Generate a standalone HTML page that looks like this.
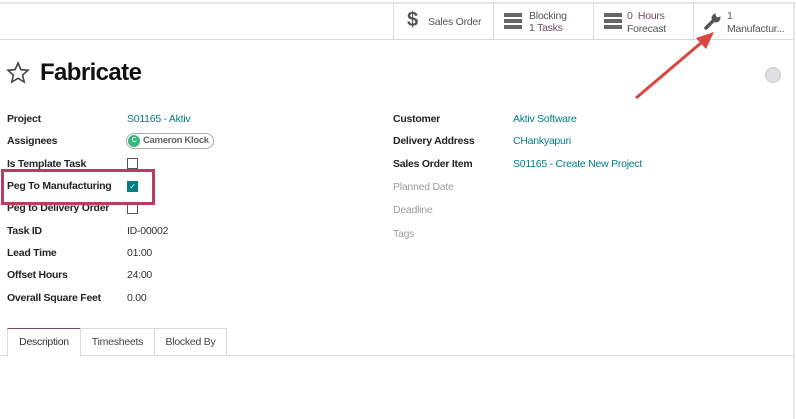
<!DOCTYPE html><html><head><style>
body{margin:0;width:796px;height:419px;overflow:hidden;background:#fff;font-family:"Liberation Sans",sans-serif;position:relative;letter-spacing:-0.25px}
.a{position:absolute;white-space:nowrap}
.l{font-size:10.5px;font-weight:bold;color:#212529}
.v{font-size:10.5px;color:#017e84}
.g{font-size:10.5px;color:#9a9ea3}
.cb{position:absolute;width:9px;height:9px;border:1px solid #555;background:#fff}
.btn{position:absolute;top:4px;height:35px;border-left:1px solid #d8dadd;font-size:10.5px;color:#555}
</style></head><body>
<div class="a" style="left:0;top:2px;width:796px;height:2px;background:#e4e5e8"></div>
<div class="a" style="left:793px;top:2px;width:2px;height:417px;background:#e4e5e8"></div>
<div class="a" style="left:0;top:39px;width:793px;height:1px;background:#d8dadd"></div>
<div class="btn" style="left:393px;width:100px"><span class="a" style="left:13px;top:5px;font-size:20px;font-weight:bold;color:#555">$</span><span class="a" style="left:34px;top:12px">Sales Order</span></div>
<div class="btn" style="left:493px;width:100px"><svg class="a" style="left:10px;top:9px" width="18" height="16"><rect y="0" width="18" height="4" fill="#666"/><rect y="6" width="18" height="4" fill="#666"/><rect y="12" width="18" height="4" fill="#666"/></svg><span class="a" style="left:35px;top:6px;line-height:12px">Blocking<br><span style="color:#714b67">1 Tasks</span></span></div>
<div class="btn" style="left:593px;width:100px"><svg class="a" style="left:10px;top:9px" width="18" height="16"><rect y="0" width="18" height="4" fill="#666"/><rect y="6" width="18" height="4" fill="#666"/><rect y="12" width="18" height="4" fill="#666"/></svg><span class="a" style="left:33px;top:6px;line-height:13px"><span style="color:#714b67">0&nbsp; Hours</span><br>Forecast</span></div>
<div class="btn" style="left:693px;width:100px"><svg class="a" style="left:10px;top:8px" width="18" height="18" viewBox="0 0 18 18"><path d="M2 16 L9 9" stroke="#555" stroke-width="3.5" stroke-linecap="round"/><circle cx="12" cy="6" r="4.5" fill="#555"/><circle cx="14" cy="3" r="2.3" fill="#fff"/></svg><span class="a" style="left:33px;top:6px;line-height:13px"><span style="color:#714b67">1</span><br>Manufactur...</span></div>
<svg class="a" style="left:0;top:0" width="796" height="419"><path d="M636 98 L708 37" stroke="#d9463f" stroke-width="3"/><polygon points="714,32 696,38 706,49" fill="#d9463f"/></svg>
<svg class="a" style="left:6px;top:61px" width="24" height="24" viewBox="0 0 24 24"><polygon points="12,2 14.9,8.6 22,9.3 16.6,14 18.2,21 12,17.3 5.8,21 7.4,14 2,9.3 9.1,8.6" fill="none" stroke="#444" stroke-width="1.6"/></svg>
<div class="a" style="left:40px;top:59px;font-size:24px;font-weight:bold;color:#111;letter-spacing:-0.6px">Fabricate</div>
<div class="a" style="left:765px;top:67px;width:14px;height:14px;border-radius:50%;background:#dee0e3;border:1px solid #c8cacd"></div>
<div class="a l" style="left:7px;top:113px">Project</div><div class="a v" style="left:127px;top:113px">S01165 - Aktiv</div>
<div class="a l" style="left:7px;top:135px">Assignees</div>
<div class="a" style="left:126px;top:133px;width:86px;height:14px;border:1px solid #aaa;border-radius:8px"></div>
<div class="a" style="left:128px;top:135px;width:12px;height:12px;border-radius:50%;background:#3bb67f;color:#fff;font-size:7px;text-align:center;line-height:12px">C</div>
<div class="a" style="left:143px;top:135px;font-size:9.5px;font-weight:bold;color:#666;letter-spacing:-0.3px">Cameron Klock</div>
<div class="a l" style="left:7px;top:158px">Is Template Task</div><div class="cb" style="left:127px;top:158px"></div>
<div class="a l" style="left:7px;top:180px">Peg To Manufacturing</div><div class="cb" style="left:127px;top:181px;background:#017e84;border-color:#017e84;color:#fff;font-size:8px;line-height:9px;text-align:center">✓</div>
<div class="a l" style="left:7px;top:202px">Peg to Delivery Order</div><div class="cb" style="left:127px;top:203px"></div>
<div class="a" style="left:1px;top:169px;width:148px;height:30px;border:3px solid #b83e61"></div>
<div class="a l" style="left:7px;top:225px">Task ID</div><div class="a" style="left:127px;top:225px;font-size:10.5px;color:#333">ID-00002</div>
<div class="a l" style="left:7px;top:247px">Lead Time</div><div class="a" style="left:127px;top:247px;font-size:10.5px;color:#333">01:00</div>
<div class="a l" style="left:7px;top:269px">Offset Hours</div><div class="a" style="left:127px;top:269px;font-size:10.5px;color:#333">24:00</div>
<div class="a l" style="left:7px;top:292px">Overall Square Feet</div><div class="a" style="left:127px;top:292px;font-size:10.5px;color:#333">0.00</div>
<div class="a l" style="left:393px;top:113px">Customer</div><div class="a v" style="left:513px;top:113px">Aktiv Software</div>
<div class="a l" style="left:393px;top:135px">Delivery Address</div><div class="a v" style="left:513px;top:135px">CHankyapuri</div>
<div class="a l" style="left:393px;top:158px">Sales Order Item</div><div class="a v" style="left:513px;top:158px">S01165 - Create New Project</div>
<div class="a g" style="left:393px;top:181px">Planned Date</div>
<div class="a g" style="left:393px;top:204px">Deadline</div>
<div class="a g" style="left:393px;top:228px">Tags</div>
<div class="a" style="left:0;top:355px;width:793px;height:1px;background:#d8dadd"></div>
<div class="a" style="left:7px;top:328px;width:72px;height:27px;border:1px solid #d8dadd;border-top:1px solid #714b67;border-bottom:1px solid #fff;background:#fff;font-size:10.5px;color:#333;text-align:center;line-height:27px">Description</div>
<div class="a" style="left:80px;top:328px;width:73px;height:26px;border:1px solid #d8dadd;font-size:10.5px;color:#444;text-align:center;line-height:26px">Timesheets</div>
<div class="a" style="left:154px;top:328px;width:71px;height:26px;border:1px solid #d8dadd;font-size:10.5px;color:#444;text-align:center;line-height:26px">Blocked By</div>
</body></html>
